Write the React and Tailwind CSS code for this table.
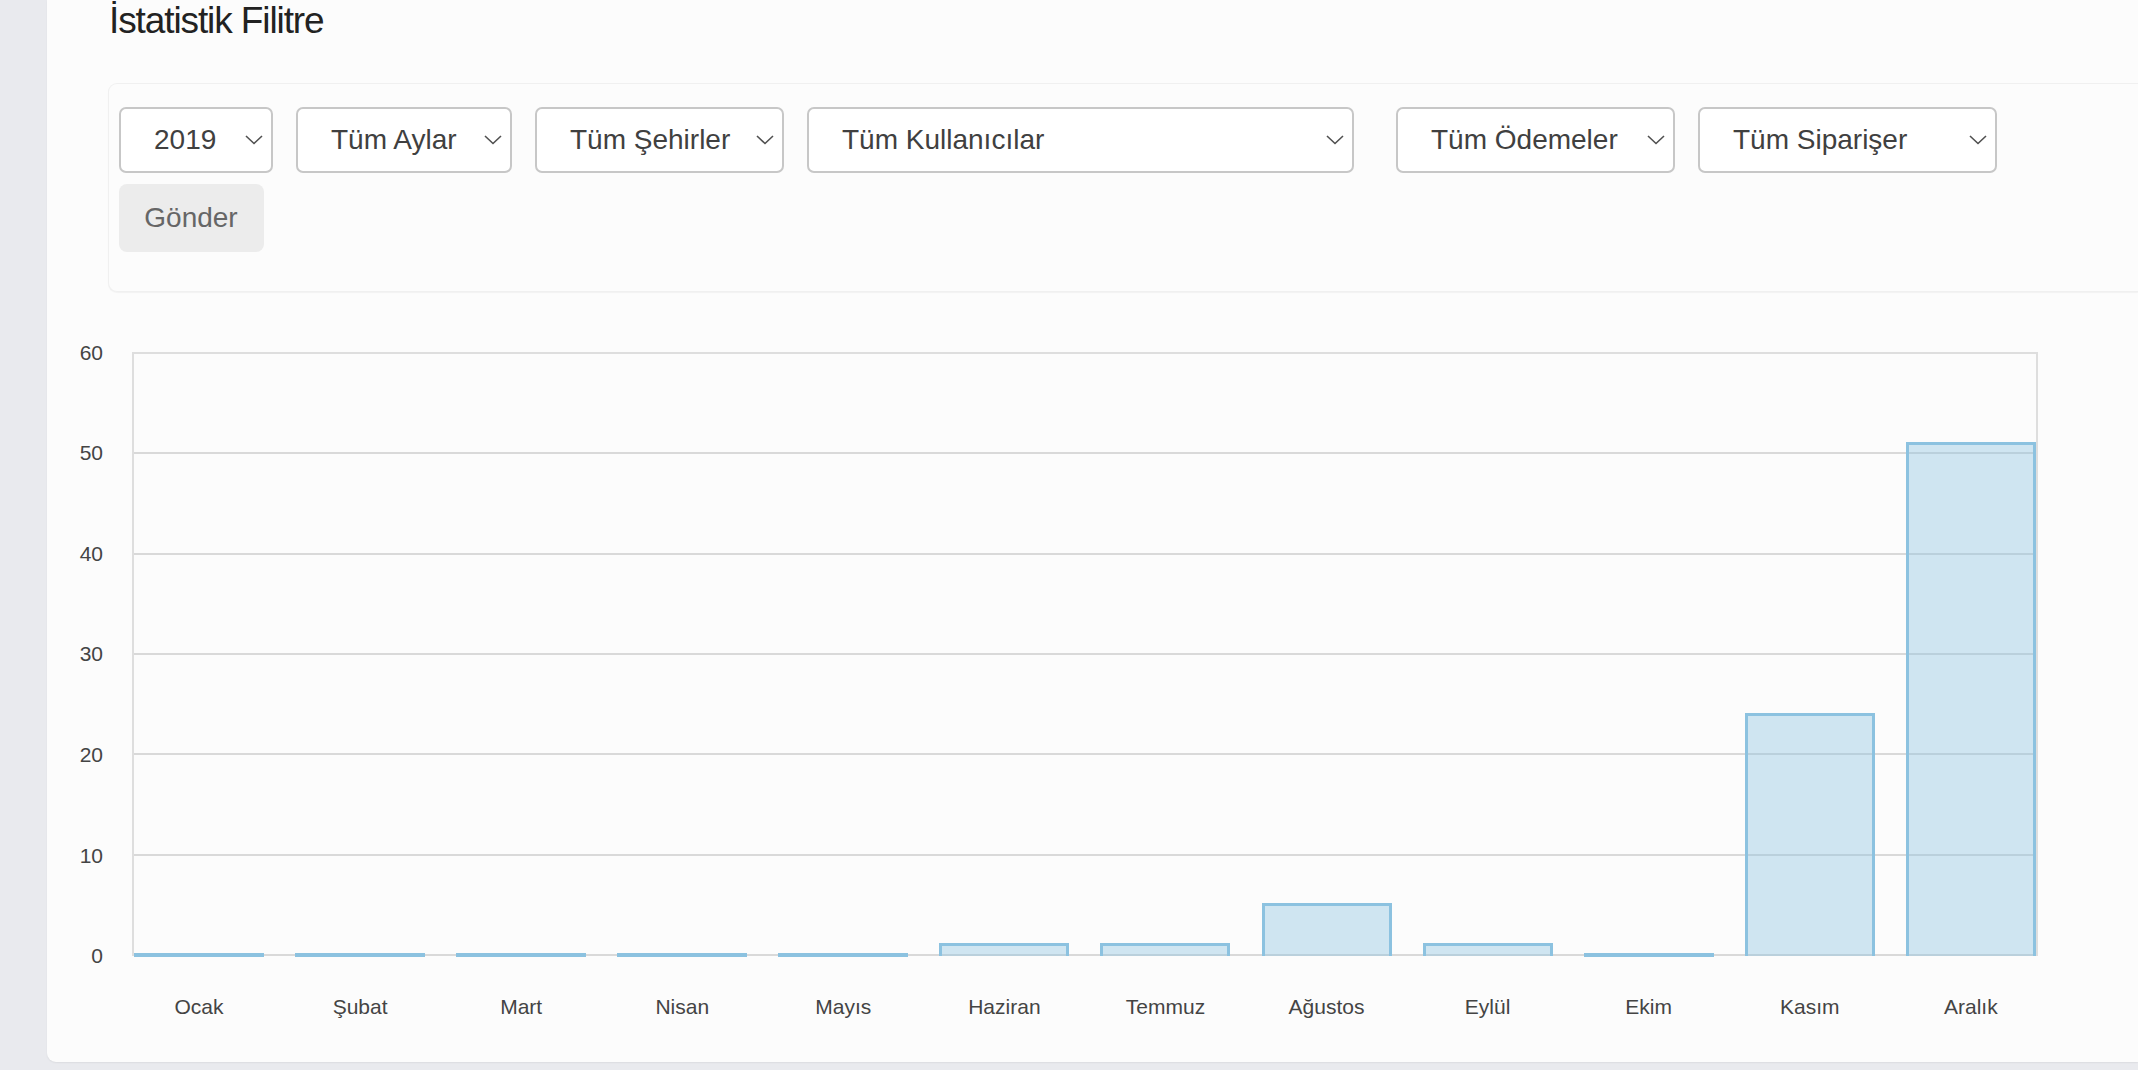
import React from "react";

const selects = [
  { label: "2019", w: "w-[154px]", extra: "" },
  { label: "Tüm Aylar", w: "w-[216px]", extra: "" },
  { label: "Tüm Şehirler", w: "w-[249px]", extra: "" },
  { label: "Tüm Kullanıcılar", w: "w-[547px]", extra: "" },
  { label: "Tüm Ödemeler", w: "w-[279px]", extra: "ml-[19px]" },
  { label: "Tüm Siparişer", w: "w-[299px]", extra: "" },
];

const data = [
  ["Ocak", 0],
  ["Şubat", 0],
  ["Mart", 0],
  ["Nisan", 0],
  ["Mayıs", 0],
  ["Haziran", 1],
  ["Temmuz", 1],
  ["Ağustos", 5],
  ["Eylül", 1],
  ["Ekim", 0],
  ["Kasım", 24],
  ["Aralık", 51],
];

const UNIT = 602 / 60;

function Chevron() {
  return (
    <svg width="18" height="10" viewBox="0 0 18 10" fill="none" className="shrink-0">
      <polyline points="1,1 9,8.5 17,1" stroke="#505050" strokeWidth="1.6" fill="none" />
    </svg>
  );
}

function SelectBox({ label, w, extra }) {
  return (
    <div
      className={`${w} ${extra} h-[66px] shrink-0 flex items-center justify-between pl-[33px] pr-[8px] bg-white border-2 border-[#c7c7c7] rounded-[7px] text-[28px] leading-none text-[#404040]`}
    >
      <span>{label}</span>
      <Chevron />
    </div>
  );
}

export default function App() {
  return (
    <div
      className="w-[2138px] h-[1070px] overflow-hidden bg-[#e9eaee] pl-[47px] flex items-start"
      style={{ fontFamily: '"Liberation Sans", Arial, Helvetica, sans-serif' }}
    >
      <div className="flex-1 h-[1062px] bg-[#fcfcfc] rounded-bl-[9px] shadow-[0_1px_2px_rgba(0,0,0,0.06)] flex flex-col">
        <div className="pl-[62px]">
          <h1 className="mt-[2px] h-[36px] text-[37px] leading-[37px] text-[#222] tracking-[-1.1px]">
            İstatistik Filitre
          </h1>

          <div className="mt-[45px] ml-[-1px] bg-[#fcfcfc] border border-r-0 border-[#f0f0f0] rounded-l-[9px] shadow-[0_1px_1px_rgba(0,0,0,0.04)] pt-[23px] pb-[39px] pl-[10px]">
            <div className="flex gap-[23px]">
              {selects.map((s) => (
                <SelectBox key={s.label} {...s} />
              ))}
            </div>
            <button className="mt-[11px] w-[145px] h-[68px] bg-[#ececec] rounded-[8px] text-[28px] leading-none text-[#666] pr-[1px]">
              Gönder
            </button>
          </div>
        </div>

        <div className="mt-[60px] flex">
          <div className="w-[56px] h-[604px] flex flex-col justify-between">
            {[60, 50, 40, 30, 20, 10, 0].map((v) => (
              <div key={v} className="h-0 flex items-center justify-end text-[21px] text-[#444]">
                <span className="leading-none">{v}</span>
              </div>
            ))}
          </div>
          <div className="ml-[29px] w-[1906px]">
            <div className="relative h-[604px] border-t-2 border-l-2 border-r-2 border-[#dedede] flex flex-col">
              {[0, 1, 2, 3, 4, 5].map((i) => (
                <div key={i} className="flex-1 border-b-2 border-[#d9d9d9]" />
              ))}
              <div className="absolute inset-0 flex items-end justify-between">
                {data.map(([m, v]) =>
                  v === 0 ? (
                    <div key={m} className="w-[130px] h-[4px] mb-[-1px] bg-[#8cc2e0]" />
                  ) : (
                    <div
                      key={m}
                      className="w-[130px] border-[3px] border-b-0 border-[#8cc2e0] bg-[#8cc2e0]/40"
                      style={{ height: `${v * UNIT + 2.5}px` }}
                    />
                  )
                )}
              </div>
            </div>
            <div className="mt-[39px] flex justify-between px-[2px]">
              {data.map(([m]) => (
                <div key={m} className="w-[130px] text-center text-[21px] leading-[24px] text-[#444]">
                  {m}
                </div>
              ))}
            </div>
          </div>
        </div>
      </div>
    </div>
  );
}
